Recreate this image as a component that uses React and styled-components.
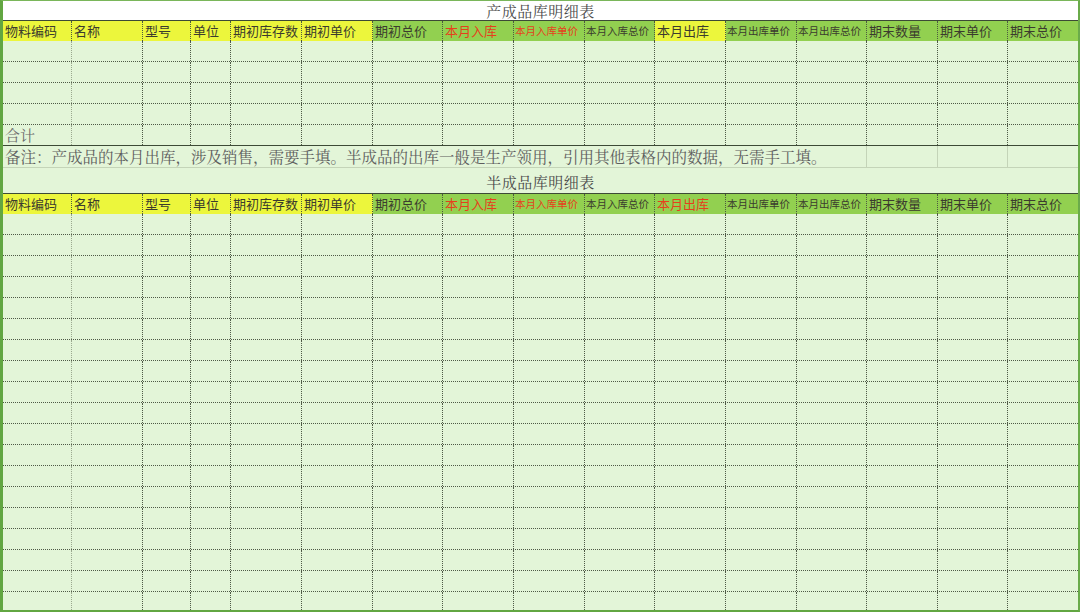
import React from "react";
import styled, { createGlobalStyle } from "styled-components";

const Global = createGlobalStyle`
  html, body { margin: 0; padding: 0; background: #ffffff; }
  * { box-sizing: border-box; }
`;

const COLS = "69px 71px 48px 40px 71px 71px 70px 71px 71px 70px 71px 71px 70px 71px 70px 70px";
const SANS = `"Noto Sans CJK SC", "Microsoft YaHei", sans-serif`;
const SERIF = `"Noto Serif CJK SC", "Source Han Serif SC", "AR PL UMing CN", "Noto Sans CJK SC", serif`;

const Sheet = styled.div`
  width: 1080px;
  height: 612px;
  overflow: hidden;
  background: #e3f5d8;
  border-top: 1px solid #7ab65a;
  border-left: 3px solid #62a642;
  border-right: 2px solid #6aab4a;
  border-bottom: 2px solid #62a642;
  display: flex;
  flex-direction: column;
`;

const TitleRow = styled.div`
  flex: none;
  height: ${(p) => p.$h}px;
  background: ${(p) => (p.$white ? "#ffffff" : "#e3f5d8")};
  border-bottom: 1px solid #3d4a36;
  display: flex;
  align-items: center;
  justify-content: center;
  font-family: ${SERIF};
  font-size: 15px;
  color: #4a4a4a;
  letter-spacing: 0.5px;
  line-height: 1;
  padding-top: ${(p) => p.$pt || 0}px;
`;

const Grid = styled.div`
  flex: none;
  display: grid;
  grid-template-columns: ${COLS};
  height: ${(p) => p.$h}px;
  border-bottom: ${(p) => p.$line || "none"};
`;

const HeadCell = styled.div`
  background: ${(p) => (p.$green ? "#92d050" : "#ecf63c")};
  color: ${(p) => (p.$red ? "#e5401c" : "#3b3b2e")};
  font-family: ${SANS};
  font-size: ${(p) => (p.$small ? "10.5px" : "13px")};
  line-height: 20px;
  padding-left: ${(p) => (p.$small ? 1 : 2)}px;
  white-space: nowrap;
  overflow: hidden;
  border-right: 1px dotted #4c5a40;
  &:last-child { border-right: none; }
`;

const Cell = styled.div`
  border-right: 1px dotted ${(p) => (p.$first ? "#9aa88e" : "#4f5a46")};
  font-family: ${SERIF};
  font-size: 15px;
  color: #6b6b6b;
  line-height: 20px;
  padding-left: 2px;
  white-space: nowrap;
  overflow: hidden;
  &:last-child { border-right: none; }
`;

const NoteCell = styled.div`
  grid-column: span ${(p) => p.$span || 1};
  border-right: 1px solid #c4d4b8;
  font-family: ${SERIF};
  font-size: 15.5px;
  color: #5e5e5e;
  line-height: 21px;
  padding-left: 2px;
  white-space: nowrap;
  overflow: visible;
  &:last-child { border-right: none; }
`;

const HEAD = [
  { t: "物料编码" },
  { t: "名称" },
  { t: "型号" },
  { t: "单位" },
  { t: "期初库存数" },
  { t: "期初单价" },
  { t: "期初总价", g: 1 },
  { t: "本月入库", g: 1, r: 1 },
  { t: "本月入库单价", g: 1, r: 1, s: 1 },
  { t: "本月入库总价", g: 1, s: 1 },
  { t: "本月出库", out: 1 },
  { t: "本月出库单价", g: 1, s: 1 },
  { t: "本月出库总价", g: 1, s: 1 },
  { t: "期末数量", g: 1 },
  { t: "期末单价", g: 1 },
  { t: "期末总价", g: 1 },
];

function Header({ second }) {
  return (
    <Grid $h={20}>
      {HEAD.map((h, i) => {
        const green = h.out ? second : !!h.g;
        const red = h.out ? second : !!h.r;
        return (
          <HeadCell key={i} $green={green} $red={red} $small={!!h.s}>
            {h.t}
          </HeadCell>
        );
      })}
    </Grid>
  );
}

const ROW_LINE = "1px dotted #4f5a46";

function DataRow({ label, line = ROW_LINE }) {
  return (
    <Grid $h={21} $line={line}>
      {HEAD.map((_, i) => (
        <Cell key={i} $first={i === 0}>
          {i === 0 ? label : null}
        </Cell>
      ))}
    </Grid>
  );
}

export default function App() {
  return (
    <>
      <Global />
      <Sheet>
        <TitleRow $h={20} $white>产成品库明细表</TitleRow>
        <Header />
        {[0, 1, 2, 3].map((i) => (
          <DataRow key={i} />
        ))}
        <DataRow label="合计" line="1px solid #3d4a36" />
        <Grid $h={22} $line="1px solid #c4d4b8">
          <NoteCell $span={13}>
            备注：产成品的本月出库，涉及销售，需要手填。半成品的出库一般是生产领用，引用其他表格内的数据，无需手工填。
          </NoteCell>
          <NoteCell />
          <NoteCell />
          <NoteCell />
        </Grid>
        <TitleRow $h={26} $pt={2}>半成品库明细表</TitleRow>
        <Header second />
        {Array.from({ length: 19 }).map((_, i) => (
          <DataRow key={i} />
        ))}
      </Sheet>
    </>
  );
}
